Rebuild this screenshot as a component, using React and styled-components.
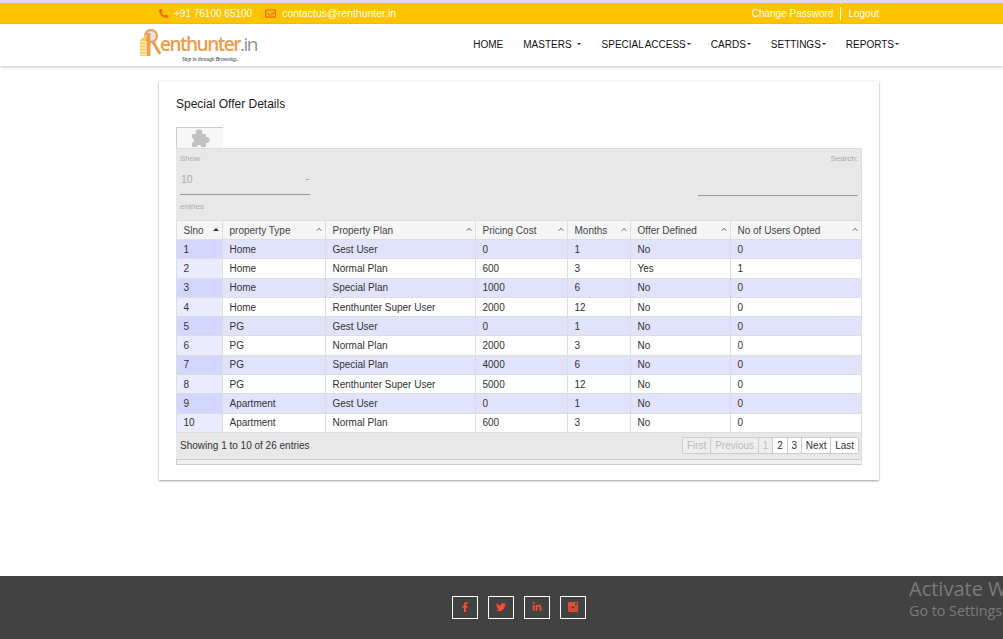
import styled, { createGlobalStyle } from "styled-components";
import { FaFacebookF, FaTwitter, FaLinkedinIn, FaPhoneAlt, FaRegEnvelope } from "react-icons/fa";

const GlobalStyle = createGlobalStyle`
  html, body {
    margin: 0;
    padding: 0;
    background: #fff;
    overflow: hidden;
    font-family: "Liberation Sans", Arial, sans-serif;
  }
`;

const columns = [
  { label: "Slno", width: 46 },
  { label: "property Type", width: 103 },
  { label: "Property Plan", width: 150 },
  { label: "Pricing Cost", width: 92 },
  { label: "Months", width: 63 },
  { label: "Offer Defined", width: 100 },
  { label: "No of Users Opted", width: 131 },
];

const rows = [
  [1, "Home", "Gest User", 0, 1, "No", 0],
  [2, "Home", "Normal Plan", 600, 3, "Yes", 1],
  [3, "Home", "Special Plan", 1000, 6, "No", 0],
  [4, "Home", "Renthunter Super User", 2000, 12, "No", 0],
  [5, "PG", "Gest User", 0, 1, "No", 0],
  [6, "PG", "Normal Plan", 2000, 3, "No", 0],
  [7, "PG", "Special Plan", 4000, 6, "No", 0],
  [8, "PG", "Renthunter Super User", 5000, 12, "No", 0],
  [9, "Apartment", "Gest User", 0, 1, "No", 0],
  [10, "Apartment", "Normal Plan", 600, 3, "No", 0],
];

const navItems = [
  { label: "HOME", gap: 20 },
  { label: "MASTERS", caret: true, spaced: true, gap: 21 },
  { label: "SPECIAL ACCESS", caret: true, gap: 20 },
  { label: "CARDS", caret: true, gap: 20 },
  { label: "SETTINGS", caret: true, gap: 20 },
  { label: "REPORTS", caret: true, gap: 0 },
];

const pages = [
  { label: "First", off: true },
  { label: "Previous", off: true },
  { label: "1", off: true },
  { label: "2" },
  { label: "3" },
  { label: "Next" },
  { label: "Last" },
];

const Page = styled.div`
  height: 639px;
  display: flex;
  flex-direction: column;
  position: relative;
  overflow: hidden;
`;

const TopBar = styled.div`
  height: 20px;
  background: #ffc400;
  border-top: 3px solid #dcdcdc;
  display: flex;
  align-items: center;
  justify-content: space-between;
  padding: 0 124px 1px 159px;
  font-size: 10px;
  color: #fff;
`;

const Contact = styled.div`
  display: flex;
  align-items: center;
`;

const ContactItem = styled.span`
  display: flex;
  align-items: center;
  gap: 6px;
  margin-right: 13px;
  font-size: ${(p) => p.$size}px;
  svg {
    color: #f4651e;
    font-size: ${(p) => p.$icon}px;
  }
`;

const Account = styled.div`
  display: flex;
  align-items: center;
`;

const AccountLink = styled.span`
  padding: 0 7px;
  line-height: 13px;
  &:first-child {
    border-right: 1px solid #fff;
  }
  &:last-child {
    padding-right: 0;
  }
`;

const NavBar = styled.header`
  height: 42px;
  background: #fff;
  box-shadow: 0 1px 3px rgba(0, 0, 0, 0.25);
  display: flex;
  align-items: center;
  justify-content: space-between;
  padding: 0 104px 0 139px;
`;

const Logo = styled.div`
  display: flex;
  align-items: flex-start;
  position: relative;
  width: 122px;
  height: 38px;
  margin-top: 2px;
`;

const LogoMark = styled.svg`
  width: 28px;
  height: 29px;
  flex: none;
`;

const LogoText = styled.span`
  font-family: "Open Sans", sans-serif;
  font-size: 19px;
  line-height: 29px;
  letter-spacing: -1.5px;
  margin-left: -7px;
  margin-top: 3px;
  font-weight: 600;
  color: #ee9c4e;
  b {
    font-weight: 400;
    color: #8f9295;
  }
`;

const Tagline = styled.span`
  position: absolute;
  left: 43px;
  top: 29px;
  font-family: "Liberation Serif", serif;
  font-style: italic;
  font-size: 5.3px;
  white-space: nowrap;
  color: #222;
`;

const Nav = styled.nav`
  display: flex;
  align-items: center;
  padding-bottom: 2px;
  font-size: 10px;
  color: #111;
`;

const NavItem = styled.span`
  display: flex;
  align-items: center;
  white-space: pre;
  word-spacing: -1px;
  margin-right: ${(p) => p.$gap}px;
`;

const Caret = styled.i`
  width: 0;
  height: 0;
  margin-left: ${(p) => (p.$spaced ? 5 : 1)}px;
  border-left: 2.5px solid transparent;
  border-right: 2.5px solid transparent;
  border-top: 2.5px solid #222;
`;

const Main = styled.main`
  flex: 1;
  padding: 15px 124px 0 159px;
`;

const Card = styled.section`
  height: 399px;
  box-sizing: border-box;
  background: #fff;
  padding: 16px 17px 0;
  box-shadow: 0 1px 2px rgba(0, 0, 0, 0.35), 0 0 3px rgba(0, 0, 0, 0.08);
`;

const Title = styled.h2`
  margin: 0;
  font-weight: 400;
  font-size: 12px;
  line-height: 14px;
  color: #222;
`;

const Tab = styled.div`
  width: 47px;
  height: 21px;
  margin-top: 16px;
  box-sizing: border-box;
  border-top: 1px solid #ccc;
  border-left: 1px solid #ccc;
  background: #f7f7f7;
  display: flex;
  align-items: center;
  justify-content: center;
`;

const PuzzleIcon = styled.svg`
  width: 19px;
  height: 19px;
  fill: #c2c2c2;
`;

const Wrapper = styled.div`
  width: 686px;
  background: #e8e8e8;
  border-top: 1px solid #ddd;
  border-right: 1px solid #ddd;
  box-sizing: border-box;
`;

const Filters = styled.div`
  height: 71px;
  box-sizing: border-box;
  padding: 5px 3px 0 4px;
  display: flex;
  justify-content: space-between;
  font-size: 8px;
  color: #aaa;
`;

const LengthBox = styled.div`
  width: 130px;
`;

const SelectLine = styled.div`
  height: 28px;
  margin-top: 4px;
  margin-bottom: 7px;
  border-bottom: 1px solid #999;
  display: flex;
  align-items: center;
  justify-content: space-between;
  box-sizing: border-box;
  font-size: 10.5px;
  padding: 0 0 3px 1px;
`;

const SelectArrow = styled.i`
  width: 3px;
  height: 1px;
  margin-right: 1px;
  background: #aaa;
`;

const SearchBox = styled.div`
  width: 160px;
  text-align: right;
`;

const SearchLine = styled.div`
  height: 32px;
  margin-top: 0;
  border-bottom: 1px solid #999;
`;

const Table = styled.table`
  width: 685px;
  table-layout: fixed;
  border-collapse: collapse;
  font-size: 10px;
  color: #333;
  th, td {
    border: 1px solid #ddd;
    padding: 0 0 0 6.5px;
    text-align: left;
    font-weight: 400;
    white-space: nowrap;
    overflow: hidden;
    box-sizing: border-box;
  }
`;

const HeadCell = styled.th`
  height: 19px;
  background: #f5f5f5;
  position: relative;
  color: #444;
`;

const SortIcon = styled.svg`
  position: absolute;
  right: 3px;
  top: 6px;
  width: 6px;
  height: 5px;
`;

const Row = styled.tr`
  height: 19.3px;
  background: ${(p) => (p.$odd ? "#e1e3fd" : "#fff")};
`;

const SortedCell = styled.td`
  background: ${(p) => (p.$odd ? "#d3d6ff" : "#eaebff")};
`;

const Bottom = styled.div`
  height: 26px;
  display: flex;
  align-items: center;
  justify-content: space-between;
  padding: 0 2px 0 4px;
  font-size: 10px;
  color: #333;
`;

const Pager = styled.div`
  display: flex;
  height: 15px;
  border: 1px solid #ccc;
  border-radius: 2px;
  background: #fff;
`;

const PageButton = styled.span`
  padding: 0 3.9px;
  line-height: 15px;
  font-size: 10px;
  border-left: 1px solid #ccc;
  color: ${(p) => (p.$off ? "#bbb" : "#333")};
  background: ${(p) => (p.$off ? "#eee" : "#fff")};
  &:first-child {
    border-left: none;
  }
`;

const ScrollBar = styled.div`
  height: 6px;
  background: #f0f0f0;
  border-top: 1px solid #ccc;
  border-bottom: 1px solid #ccc;
  border-left: 1px solid #ccc;
  box-sizing: border-box;
`;

const Footer = styled.footer`
  height: 63px;
  background: #424242;
  display: flex;
  align-items: center;
  justify-content: center;
  gap: 10px;
  padding: 0 0 1px 34px;
  box-sizing: border-box;
`;

const Social = styled.span`
  width: 26px;
  height: 23px;
  box-sizing: border-box;
  border: 1px solid #fff;
  display: flex;
  align-items: center;
  justify-content: center;
  color: #fb5030;
  font-size: 10px;
`;

const Activate = styled.div`
  position: absolute;
  left: 909px;
  top: 577px;
  white-space: nowrap;
  font-family: "Open Sans", sans-serif;
  color: #7b7b7b;
  font-size: 14.3px;
  line-height: 20px;
  strong {
    display: block;
    font-weight: 400;
    font-size: 20px;
    line-height: 24px;
  }
`;

function SortMark({ active }) {
  return (
    <SortIcon viewBox="0 0 6 5">
      {active ? (
        <polygon points="0,4 3,1 6,4" fill="#333" />
      ) : (
        <polyline points="0.8,3.6 3,1.4 5.2,3.6" fill="none" stroke="#555" strokeWidth="1" />
      )}
    </SortIcon>
  );
}

function Puzzle() {
  return (
    <PuzzleIcon viewBox="0 0 19 19">
      <rect x="1" y="5" width="14" height="13" rx="1" />
      <circle cx="8" cy="3.5" r="3.2" />
      <circle cx="15.5" cy="11" r="3" />
      <circle cx="8" cy="18.5" r="2.4" fill="#f7f7f7" />
      <circle cx="0.5" cy="11.5" r="2.4" fill="#f7f7f7" />
    </PuzzleIcon>
  );
}

function InstagramMark() {
  return (
    <svg width="10" height="10" viewBox="0 0 10 10">
      <rect width="10" height="10" rx="1.2" fill="#e34f30" />
      <rect x="1" y="3.6" width="8" height="5.4" fill="#b84a36" />
      <circle cx="5" cy="5.4" r="2.5" fill="#fb5030" />
      <circle cx="5" cy="5.4" r="1.4" fill="#424242" />
      <rect x="7" y="1" width="2" height="2" fill="#424242" />
    </svg>
  );
}

export default function App() {
  return (
    <Page>
      <GlobalStyle />
      <TopBar>
        <Contact>
          <ContactItem $icon={9} $size={10}><FaPhoneAlt /> +91 76100 65100</ContactItem>
          <ContactItem $icon={11} $size={10.5}><FaRegEnvelope /> contactus@renthunter.in</ContactItem>
        </Contact>
        <Account>
          <AccountLink>Change Password</AccountLink>
          <AccountLink>Logout</AccountLink>
        </Account>
      </TopBar>
      <NavBar>
        <Logo>
          <LogoMark viewBox="0 0 28 29">
            <circle cx="12" cy="9" r="6" fill="#e4e4e4" stroke="#ee9c4e" strokeWidth="2" />
            <path d="M1 29V13l6-5v21z" fill="#f5d05a" />
            <path d="M1 15h6M1 18h6M1 21h6M1 24h6M1 27h6" stroke="#fff" strokeWidth="0.8" />
            <path d="M9.5 6v23" stroke="#ee9c4e" strokeWidth="4" />
            <path d="M14 15l7 12" stroke="#ee9c4e" strokeWidth="3" />
          </LogoMark>
          <LogoText>enthunter<b>.in</b></LogoText>
          <Tagline>Step in through Browsing..</Tagline>
        </Logo>
        <Nav>
          {navItems.map((item) => (
            <NavItem key={item.label} $gap={item.gap}>
              {item.label}
              {item.caret && <Caret $spaced={item.spaced} />}
            </NavItem>
          ))}
        </Nav>
      </NavBar>
      <Main>
        <Card>
          <Title>Special Offer Details</Title>
          <Tab><Puzzle /></Tab>
          <Wrapper>
            <Filters>
              <LengthBox>
                Show
                <SelectLine>10<SelectArrow /></SelectLine>
                entries
              </LengthBox>
              <SearchBox>
                Search:
                <SearchLine />
              </SearchBox>
            </Filters>
            <Table>
              <colgroup>
                {columns.map((col) => <col key={col.label} width={col.width} />)}
              </colgroup>
              <thead>
                <tr>
                  {columns.map((col, i) => (
                    <HeadCell key={col.label}>{col.label}<SortMark active={i === 0} /></HeadCell>
                  ))}
                </tr>
              </thead>
              <tbody>
                {rows.map((row, r) => (
                  <Row key={row[0]} $odd={r % 2 === 0}>
                    {row.map((value, i) => (
                      i === 0
                        ? <SortedCell key={i} $odd={r % 2 === 0}>{value}</SortedCell>
                        : <td key={i}>{value}</td>
                    ))}
                  </Row>
                ))}
              </tbody>
            </Table>
            <Bottom>
              <span>Showing 1 to 10 of 26 entries</span>
              <Pager>
                {pages.map((p) => <PageButton key={p.label} $off={p.off}>{p.label}</PageButton>)}
              </Pager>
            </Bottom>
            <ScrollBar />
          </Wrapper>
        </Card>
      </Main>
      <Footer>
        <Social><FaFacebookF /></Social>
        <Social><FaTwitter /></Social>
        <Social><FaLinkedinIn /></Social>
        <Social><InstagramMark /></Social>
      </Footer>
      <Activate>
        <strong>Activate Windows</strong>
        Go to Settings to activate Windows.
      </Activate>
    </Page>
  );
}
